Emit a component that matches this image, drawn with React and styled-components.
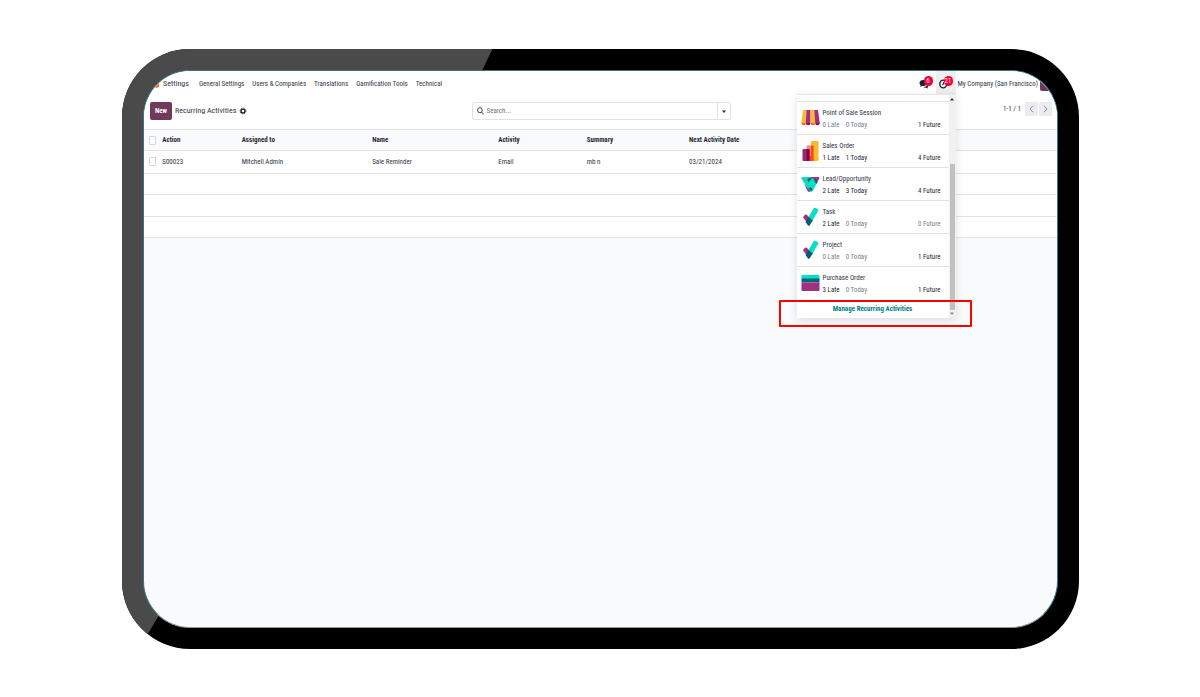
import React from "react";
import styled, { createGlobalStyle, css } from "styled-components";

const Global = createGlobalStyle`
  *, *::before, *::after { box-sizing: border-box; }
  body {
    margin: 0;
    background: #ffffff;
    color: #2f3744;
    font-family: "Roboto Condensed", Roboto, sans-serif;
    font-size: 7px;
    line-height: 12px;
  }
  button, input { font: inherit; color: inherit; }
  button { border: 0; padding: 0; background: none; cursor: pointer; }
  a { color: inherit; text-decoration: none; }
`;

const Page = styled.div`
  min-height: 100vh;
  padding: 49px 121px 48px 122px;
  display: flex;
`;

const Bezel = styled.div`
  position: relative;
  flex: 1;
  min-width: 0;
  display: flex;
  padding: 21px;
  border-radius: 68px;
  background: #000000;
  overflow: hidden;

  &::before {
    content: "";
    position: absolute;
    inset: 0;
    background: #4a4a4a;
    clip-path: polygon(0 0, 38.7% 0, 37.6% 3.7%, 3.9% 94.3%, 2.8% 97.2%, 0 100%);
  }
`;

const Screen = styled.div`
  position: relative;
  flex: 1;
  min-width: 0;
  border: 1px solid #3c7482;
  border-bottom-color: #8c9498;
  border-radius: 47px;
  background: #f9fafc;
  overflow: hidden;
`;

const Nav = styled.nav`
  display: flex;
  align-items: center;
  height: 26px;
  padding-left: 8px;
  background: #ffffff;
`;

const Brand = styled.a`
  display: flex;
  align-items: center;
  gap: 4px;
  margin-right: 10px;
  font-size: 8px;
`;

const Menu = styled.div`
  display: flex;
  gap: 8px;
  flex: 1;
  white-space: nowrap;
`;

const Tray = styled.div`
  display: flex;
  align-items: center;
  align-self: stretch;
  white-space: nowrap;
`;

const TrayItem = styled.div`
  position: relative;
  align-self: flex-start;
`;

const TrayButton = styled.button`
  position: relative;
  display: flex;
  align-items: center;
  width: 20px;
  height: 24px;
  padding: 2px 0 0 3px;
  background: ${(p) => (p.$open ? "#eeeeee" : "transparent")};
`;

const Badge = styled.span`
  position: absolute;
  top: 5px;
  left: 8px;
  min-width: 9px;
  height: 10px;
  padding: 0 1px;
  border-radius: 5px;
  background: #fb0034;
  color: #ffffff;
  line-height: 10px;
  text-align: center;
`;

const Company = styled.button`
  margin-left: 2px;
`;

const Avatar = styled.span`
  width: 17px;
  height: 14px;
  margin-left: 2px;
  border-radius: 2px;
  background: #6d3a5c;
`;

const ControlPanel = styled.header`
  display: grid;
  grid-template-columns: 1fr 259px 1fr;
  align-items: center;
  height: 32px;
  padding: 0 5px 4px 6px;
  background: #ffffff;
`;

const Title = styled.div`
  display: flex;
  align-items: center;
  gap: 3px;
  white-space: nowrap;

  h1 { margin: 0; font-size: 8px; font-weight: 400; }
`;

const NewButton = styled.button`
  width: 22px;
  height: 18px;
  border-radius: 2px;
  background: #71395b;
  color: #ffffff;
  font-weight: 700;
`;

const SearchBox = styled.div`
  display: flex;
  align-items: stretch;
  height: 18px;
  border: 1px solid #dfe2e6;
  border-radius: 2px;
`;

const SearchLabel = styled.label`
  flex: 1;
  display: flex;
  align-items: center;
  gap: 3px;
  padding-left: 4px;
`;

const SearchInput = styled.input`
  flex: 1;
  min-width: 0;
  padding: 0;
  border: 0;
  outline: 0;
  background: transparent;

  &::placeholder { color: #6b7280; opacity: 1; }
`;

const SearchToggle = styled.button`
  display: grid;
  place-items: center;
  width: 13px;
  border-left: 1px solid #dfe2e6;
`;

const Pager = styled.div`
  display: flex;
  align-items: center;
  align-self: start;
  justify-content: flex-end;
  gap: 1px;
  padding-top: 5px;

  span { margin-right: 3px; }
`;

const PagerButton = styled.button`
  display: grid;
  place-items: center;
  width: 13px;
  height: 14px;
  border-radius: 1px;
  background: #ebebf0;
`;

const List = styled.table`
  width: 100%;
  border-collapse: separate;
  border-spacing: 0;
  border-top: 1px solid #dfe3e6;
  table-layout: fixed;
  background: #ffffff;

  th, td {
    padding: 0 0 1px;
    border-bottom: 1px solid #dfe3e6;
    text-align: left;
    line-height: 12px;
    white-space: nowrap;
  }
  th { background: #f9fafc; color: #1f2937; font-weight: 700; padding: 0; }
`;

const Row = styled.tr`
  height: ${(p) => p.$height}px;
`;

const Col = styled.col`
  width: ${(p) => p.$width};
`;

const Check = styled.input`
  appearance: none;
  display: block;
  width: 7px;
  height: 9px;
  margin: 0 0 0 5px;
  border: 1px solid #d3d6da;
  border-radius: 1px;
  background: #ffffff;
`;

const Dropdown = styled.div`
  position: absolute;
  z-index: 2;
  top: 23px;
  right: 0;
  width: 159px;
  display: flex;
  background: #ffffff;
  border-top: 1px solid #e4e6e9;
  box-shadow: 0 2px 8px rgba(0, 0, 0, 0.12);
`;

const Activities = styled.div`
  flex: 1;
  padding-top: 6px;
`;

const Activity = styled.div`
  display: flex;
  align-items: center;
  gap: 3px;
  height: 33px;
  padding: 0 8px 0 4px;
  border-top: 1px solid #dfe3e6;
  line-height: 12px;

  & > svg { flex: none; }
`;

const ActivityBody = styled.div`
  flex: 1;
  padding-top: 1px;
`;

const Counts = styled.div`
  display: flex;
  gap: 6px;
`;

const Count = styled.button`
  line-height: 12px;
  color: ${(p) => (p.$empty ? "#7b828c" : "#1f2937")};
  ${(p) => p.$end && css`margin-left: auto;`}
`;

const ManageLink = styled.a`
  display: block;
  padding: 4px 0 3px;
  color: #017e84;
  font-weight: 700;
  text-align: center;
`;

const Scrollbar = styled.div`
  display: flex;
  flex-direction: column;
  align-items: center;
  width: 7px;
  padding: 3px 0;
  background: #f1f1f1;
`;

const Thumb = styled.div`
  width: 5px;
  height: 146px;
  margin-top: auto;
  margin-bottom: 2px;
  background: #c1c1c1;
`;

const Highlight = styled.div`
  position: absolute;
  left: -18px;
  right: -16px;
  bottom: -9px;
  height: 27px;
  border: 2px solid #ff0000;
  border-radius: 1px;
  pointer-events: none;
`;

const StoreIcon = () => (
  <svg width="19" height="18" viewBox="0 0 19 18">
    <path d="M2 1h3.600L5 14H.4z" fill="#fbb932" />
    <path d="M5.500 1h4v13H4.800z" fill="#a2307f" />
    <path d="M9.500 1h4l.7 13H9.500z" fill="#fbb932" />
    <path d="M13.300 1H17l1.800 13h-4.600z" fill="#a2307f" />
    <path d="M.4 14H5a2.300 2.300 0 0 1-4.600 0zM9.500 14h4.700a2.300 2.300 0 0 1-4.700 0z" fill="#fc6a1d" />
    <path d="M4.900 14h4.600a2.300 2.300 0 0 1-4.600 0zM14.200 14h4.600a2.300 2.300 0 0 1-4.600 0z" fill="#85145c" />
  </svg>
);

const SalesIcon = () => (
  <svg width="19" height="20" viewBox="0 0 19 20">
    <rect x="10" y="0" width="7.500" height="20" rx="1" fill="#fbb932" />
    <rect x="5.500" y="4.500" width="7" height="15.500" rx="1" fill="#fc868b" />
    <path d="M10 4.500h1.500a1 1 0 0 1 1 1V19a1 1 0 0 1-1 1H10z" fill="#fc4b08" />
    <path d="M5.500 8h3v12h-3zM8.500 15h4v4a1 1 0 0 1-1 1h-3z" fill="#fc4b08" />
    <rect x="1.500" y="8" width="7" height="12" rx="1" fill="#962b74" />
    <path d="M5.500 8h2a1 1 0 0 1 1 1v10a1 1 0 0 1-1 1h-2z" fill="#8a0048" />
  </svg>
);

const CrmIcon = () => (
  <svg width="19" height="18" viewBox="0 0 19 18">
    <path d="M.4 3.200Q.2 2 1.500 2H9L4.800 8.500 3 8z" fill="#1ad3bb" />
    <path d="M9 2h8.500q1.500 0 .8 1.600L16 7.500z" fill="#a2307f" />
    <path d="m3.200 9 6.300-5.500q1.300-1 2.500 0l4.200 4L12 15.500q-1.500 2.300-3 1z" fill="#05e0c5" />
    <path d="M6.200 4.800 9 2.300l1.800 1.500-3.500 3.400z" fill="#005e7a" />
    <path d="m12.800 4.200 1.200-.7 2.600 3.300-1.400 2.200z" fill="#005e7a" />
    <path d="m7.500 13.500 2-1.500 2 2-1.200 2z" fill="#005e7a" />
    <path d="M3.300 9.500 9 15.800 8.500 17q-1 .2-1.800-1z" fill="#a2307f" />
  </svg>
);

const CheckIcon = () => (
  <svg width="19" height="20" viewBox="0 0 19 20">
    <path d="M12.500 1.500q1-1.200 2.200-.6l2 1.200q1 .8.400 2L11 14.500 6.500 12z" fill="#05e0c5" />
    <path d="M2 10.300 4 7.800q.8-.8 1.800 0l4 4.500L7 17z" fill="#a2307f" />
    <path d="m7.500 10.200 4.300 3.300-3.300 5q-.7.900-1.500 0L4.500 15z" fill="#005e7a" />
  </svg>
);

const PurchaseIcon = () => (
  <svg width="19" height="18" viewBox="0 0 19 18">
    <path d="M.5 2q0-1 1-1h16q1 0 1 1v3h-18z" fill="#05e0c5" />
    <path d="M.5 4.500h18v4h-18z" fill="#00657b" />
    <path d="M.5 8.500h18V16q0 1-1 1h-16q-1 0-1-1z" fill="#a2307f" />
  </svg>
);

const ChatIcon = () => (
  <svg width="10" height="10" viewBox="0 0 10 10" fill="#1c222b">
    <path d="M4.300 1C2 1 .5 2.300.5 4c0 1 .5 1.700 1.200 2.200L1.100 8l2-1h1.200C6.500 7 8 5.700 8 4S6.500 1 4.300 1z" />
    <path d="M9 4c0 2.400-2 4-4.700 4 .7.600 1.700.8 2.700.7L9 9.500l-.5-1.400C9.800 7.200 10 5.200 9 4z" />
  </svg>
);

const ClockIcon = () => (
  <svg width="9" height="10" viewBox="0 0 9 10" fill="none" stroke="#1c222b">
    <ellipse cx="4.200" cy="5" rx="3.400" ry="3.900" strokeWidth="1.400" />
    <path d="M4.500 2.800v2.500H3" strokeWidth=".9" />
  </svg>
);

const GearIcon = () => (
  <svg width="8" height="8" viewBox="0 0 8 8">
    <circle cx="4" cy="4" r="1.900" fill="none" stroke="#1f2937" strokeWidth="1.400" />
    <circle cx="4" cy="4" r="2.900" fill="none" stroke="#1f2937" strokeWidth=".9" strokeDasharray="1.300 .978" />
  </svg>
);

const SearchIcon = () => (
  <svg width="7" height="8" viewBox="0 0 7 8" fill="none" stroke="#374151" strokeWidth="1">
    <ellipse cx="2.900" cy="3.200" rx="2.300" ry="2.600" />
    <path d="m4.600 5.100 2 2.300" />
  </svg>
);

const Chevron = ({ next }) => (
  <svg width="5" height="8" viewBox="0 0 5 8" fill="none" stroke="#7b828c" strokeWidth=".9">
    <path d={next ? "M1 .8 4 4 1 7.200" : "M4 .8 1 4l3 3.200"} />
  </svg>
);

const Caret = ({ up, color = "#1f2937" }) => (
  <svg width="4" height="3" viewBox="0 0 4 3" fill={color}>
    <path d={up ? "M0 2.500h4L2 0z" : "M0 .5h4L2 3z"} />
  </svg>
);

const LogoMark = () => (
  <svg width="7" height="10" viewBox="0 0 7 10">
    <path d="M0 2h7v5.500L5 9 0 7z" fill="#fc6a1d" />
  </svg>
);

const menu = ["General Settings", "Users & Companies", "Translations", "Gamification Tools", "Technical"];

const columns = [
  ["Action", "8.7%"],
  ["Assigned to", "14.3%"],
  ["Name", "13.8%"],
  ["Activity", "9.7%"],
  ["Summary", "11.2%"],
  ["Next Activity Date", "auto"],
];

const record = ["S00023", "Mitchell Admin", "Sale Reminder", "Email", "mb n", "03/21/2024"];

const activities = [
  ["Point of Sale Session", StoreIcon, 0, 0, 1],
  ["Sales Order", SalesIcon, 1, 1, 4],
  ["Lead/Opportunity", CrmIcon, 2, 3, 4],
  ["Task", CheckIcon, 2, 0, 0],
  ["Project", CheckIcon, 0, 0, 1],
  ["Purchase Order", PurchaseIcon, 3, 0, 1],
];

function ActivityMenu() {
  return (
    <Dropdown>
      <Activities>
        {activities.map(([name, Icon, late, today, future]) => (
          <Activity key={name}>
            <Icon />
            <ActivityBody>
              <div>{name}</div>
              <Counts>
                <Count $empty={!late}>{late} Late</Count>
                <Count $empty={!today}>{today} Today</Count>
                <Count $empty={!future} $end>{future} Future</Count>
              </Counts>
            </ActivityBody>
          </Activity>
        ))}
        <ManageLink href="#recurring">Manage Recurring Activities</ManageLink>
      </Activities>
      <Scrollbar aria-hidden="true">
        <Caret up />
        <Thumb />
        <Caret color="#8a8a8a" />
      </Scrollbar>
      <Highlight />
    </Dropdown>
  );
}

export default function App() {
  return (
    <Page>
      <Global />
      <Bezel>
        <Screen>
          <Nav>
            <Brand href="#settings"><LogoMark />Settings</Brand>
            <Menu>
              {menu.map((item) => <a key={item} href="#menu">{item}</a>)}
            </Menu>
            <Tray>
              <TrayItem>
                <TrayButton aria-label="Messages"><ChatIcon /><Badge>6</Badge></TrayButton>
              </TrayItem>
              <TrayItem>
                <TrayButton $open aria-label="Activities"><ClockIcon /><Badge>21</Badge></TrayButton>
                <ActivityMenu />
              </TrayItem>
              <Company>My Company (San Francisco)</Company>
              <Avatar />
            </Tray>
          </Nav>
          <ControlPanel>
            <Title>
              <NewButton>New</NewButton>
              <h1>Recurring Activities</h1>
              <GearIcon />
            </Title>
            <SearchBox>
              <SearchLabel>
                <SearchIcon />
                <SearchInput type="text" aria-label="Search" placeholder="Search..." />
              </SearchLabel>
              <SearchToggle aria-label="Search options"><Caret /></SearchToggle>
            </SearchBox>
            <Pager>
              <span>1-1 / 1</span>
              <PagerButton aria-label="Previous"><Chevron /></PagerButton>
              <PagerButton aria-label="Next"><Chevron next /></PagerButton>
            </Pager>
          </ControlPanel>
          <List>
            <colgroup>
              <Col $width="2%" />
              {columns.map(([name, width]) => <Col key={name} $width={width} />)}
            </colgroup>
            <thead>
              <Row $height={21}>
                <th><Check type="checkbox" aria-label="Select all" /></th>
                {columns.map(([name]) => <th key={name}>{name}</th>)}
              </Row>
            </thead>
            <tbody>
              <Row $height={23}>
                <td><Check type="checkbox" aria-label="Select S00023" /></td>
                {record.map((value) => <td key={value}>{value}</td>)}
              </Row>
              <Row $height={21}><td colSpan={7} /></Row>
              <Row $height={22}><td colSpan={7} /></Row>
              <Row $height={21}><td colSpan={7} /></Row>
            </tbody>
          </List>
        </Screen>
      </Bezel>
    </Page>
  );
}
